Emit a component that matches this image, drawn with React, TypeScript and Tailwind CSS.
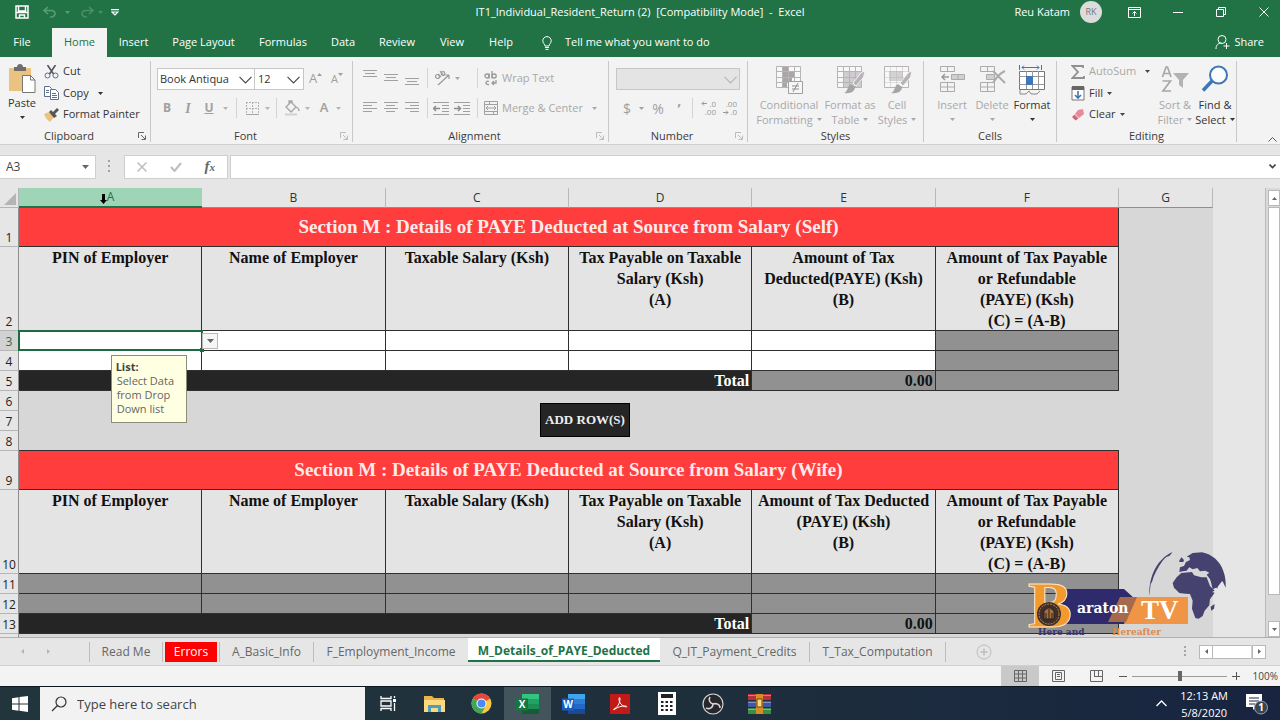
import React from "react";

const ui = "font-['Open_Sans','Noto_Sans',sans-serif]";
const serif = "font-['Liberation_Serif',serif]";

function Caret({ className = "text-[#444]" }: { className?: string }) {
  return (
    <svg width="5" height="3" viewBox="0 0 5 3" className={`shrink-0 ${className}`}>
      <path d="M0 0h5L2.5 3z" fill="currentColor" />
    </svg>
  );
}

function Chevron({ className = "" }: { className?: string }) {
  return (
    <svg width="13" height="8" viewBox="0 0 13 8" fill="none" stroke="currentColor" strokeWidth="1.1" className={className}>
      <path d="M.5.8 6.500 7l6-6.200" />
    </svg>
  );
}

function Lines({ kind }: { kind: "left" | "center" | "right" }) {
  const x = kind === "left" ? 0 : kind === "center" ? 2 : 5;
  return (
    <svg width="14" height="12" viewBox="0 0 14 12" fill="none" stroke="#a0a0a0">
      <path d={`M0 .5h14M${x} 3.500h9M0 6.500h14M${x} 9.500h9`} />
    </svg>
  );
}

function ThreeLines() {
  return (
    <svg width="14" height="8" viewBox="0 0 14 8" fill="none" stroke="#a0a0a0">
      <path d="M0 .5h14M2 3.500h10M0 6.500h14" />
    </svg>
  );
}

function Indent({ right = false }: { right?: boolean }) {
  return (
    <svg width="16" height="13" viewBox="0 0 16 13" fill="none" stroke="#a0a0a0">
      <path d="M0 .5h16M9 3.500h7M9 6.500h7M9 9.500h7M0 12.500h16" />
      <path d={right ? "M0 6.500h6M4 4l2.500 2.500L4 9" : "M7 6.500H1M3 4L.5 6.500 3 9"} strokeWidth="1.500" stroke="#8c8c8c" />
    </svg>
  );
}

function Sep() {
  return <span className="mx-1 h-5 w-px shrink-0 bg-[#d4d4d4]" />;
}

function Group({ label, width, launcher = "", children }: { label: string; width: string; launcher?: string; children: React.ReactNode }) {
  return (
    <section aria-label={label} className={`flex shrink-0 flex-col border-r border-[#c8c8c8] ${width}`}>
      <div className="flex h-[68px] shrink-0">{children}</div>
      <div className="flex h-[13px] shrink-0 items-center text-[11px] leading-[13px] text-[#3b3b3b]">
        <span className="flex-1 text-center">{label}</span>
        {launcher && (
          <button aria-label={`${label} settings`} className={`mr-1 ${launcher}`}>
            <svg width="8" height="8" viewBox="0 0 8 8" fill="none" stroke="currentColor">
              <path d="M.5 6V.5H6M3 3l4 4M7.500 3.500v4h-4" />
            </svg>
          </button>
        )}
      </div>
    </section>
  );
}

function BigButton({ lines, width, off = false, children }: { lines: string[]; width: string; off?: boolean; children: React.ReactNode }) {
  return (
    <button disabled={off} className={`flex flex-col items-center pt-1 text-[11px] leading-[15px] ${width} ${off ? "text-[#a8a8a8]" : "text-[#333]"}`}>
      <span className="flex h-8 items-start">{children}</span>
      <span className="whitespace-nowrap">{lines[0]}</span>
      <span className="flex h-[15px] items-center gap-1 whitespace-nowrap">
        {lines[1]}
        <Caret className="text-current" />
      </span>
    </button>
  );
}

function GridIcon({ kind }: { kind: "cond" | "table" | "cell" }) {
  return (
    <svg width="30" height="30" viewBox="0 0 30 30" fill="none">
      <path d="M2.500 1.500h24v21h-24z" fill="#f8f8f8" stroke="#b5b5b5" />
      {kind === "cond" && <path d="M9 2h5v5H9zM9 7h12v5H9zM9 12h9v5H9zM9 17h4v5H9z" fill="#a9a5a9" />}
      {kind === "table" && <path d="M9 7h17v15H9z" fill="#cfcbd0" />}
      {kind === "cell" && <path d="M7 6h14v10H7z" fill="#d5cfd6" />}
      <path d="M2 6.500h24M2 12.500h24M2 17.500h24M8.500 2v20M14.500 2v20M20.500 2v20" stroke="#b5b5b5" strokeOpacity={kind === "cell" ? 0.4 : 1} />
      {kind === "cond" ? (
        <g>
          <path d="M14.500 16.500h14v12h-14z" fill="#f6f6f6" stroke="#a0a0a0" />
          <path d="M18 21h7M18 24h7M24 18l-5 9" stroke="#8f8f8f" />
        </g>
      ) : (
        <g>
          <path d="M29 6c1 2 0 5-1 7l-7 8-3-3 8-10z" fill="#b5b5b5" stroke="#f3f3f3" />
          <path d="M16 19l4 3c0 4-4 7-11 6 4-1 3-7 7-9z" fill="#a5a5a5" />
        </g>
      )}
    </svg>
  );
}

function CellsIcon({ kind }: { kind: "insert" | "delete" }) {
  return (
    <svg width="28" height="28" viewBox="0 0 28 28" fill="none" stroke="#ababab">
      <path d="M2.500 1.500h14v5h-14zM9.500 1.500v5M2.500 17.500h14v9h-14zM9.500 17.500v9M2.500 22h14" />
      {kind === "insert" ? (
        <g>
          <path d="M13.500 9.500h13v5h-13zM20 9.500v5" fill="#d0d0d0" />
          <path d="M11 12H4M7 9l-3 3 3 3" strokeWidth="1.500" stroke="#9a9a9a" />
        </g>
      ) : (
        <g>
          <path d="M8.500 9.500h8v5h-8z" fill="#d0d0d0" />
          <path d="M15 6l12 12M27 6c-5 2-9 7-12 12" strokeWidth="2" />
        </g>
      )}
    </svg>
  );
}

function FormatIcon() {
  return (
    <svg width="28" height="30" viewBox="0 0 28 30" fill="none">
      <path d="M1.500 0v5M23.500 0v5M4 2.500h17M6 .5l-2 2 2 2M19 .5l2 2-2 2" stroke="#3f76b5" />
      <path d="M1.500 6.500h25v18h-25z" fill="#fff" stroke="#777" />
      <path d="M1 11.500h25M1 19.500h25M8.500 6v18M14.500 6v18M20.500 6v18" stroke="#999" />
      <path d="M8 11h7v9H8z" fill="#3f76b5" />
      <path d="M2 25v4h6l3-3 2 3h6l3-3" stroke="#888" />
    </svg>
  );
}

const tabs = [
  { name: "Insert", width: "w-[53px]" },
  { name: "Page Layout", width: "w-[87px]" },
  { name: "Formulas", width: "w-[72px]" },
  { name: "Data", width: "w-[48px]" },
  { name: "Review", width: "w-[60px]" },
  { name: "View", width: "w-[50px]" },
  { name: "Help", width: "w-[48px]" },
];

function TitleBar() {
  return (
    <header className="bg-[#217346] text-[11px] text-white">
      <div className="flex h-7 items-start">
        <div className="flex h-6 flex-1 items-center">
          <button aria-label="Save" className="ml-[15px]">
            <svg width="14" height="14" viewBox="0 0 14 14" fill="none" stroke="#fff" strokeWidth="1.500">
              <path d="M1 1h12v12H1zM1 7.500h12M3.500 1v5h7V1M4.500 13v-3h5v3" />
            </svg>
          </button>
          <button aria-label="Undo" disabled className="ml-[14px] flex items-center gap-2 text-[#5a9a76]">
            <svg width="14" height="12" viewBox="0 0 14 12" fill="none" stroke="currentColor" strokeWidth="1.600">
              <path d="M5 1L1 4.500 5 8M1 4.500h7c6 0 5 7-1 6.500" />
            </svg>
            <Caret className="text-current" />
          </button>
          <button aria-label="Redo" disabled className="ml-[10px] flex items-center gap-1 text-[#4a8f69]">
            <svg width="14" height="12" viewBox="0 0 14 12" fill="none" stroke="currentColor" strokeWidth="1.600">
              <path d="M9 1l4 3.500L9 8M13 4.500H6C0 4.500 1 11.500 7 11" />
            </svg>
            <Caret className="text-current" />
          </button>
          <button aria-label="Customize toolbar" className="ml-2">
            <svg width="8" height="7" viewBox="0 0 8 7" fill="none" stroke="#fff" strokeWidth="1.200">
              <path d="M0 .6h8M1 3l3 3 3-3z" />
            </svg>
          </button>
        </div>
        <h1 className="flex h-6 items-center whitespace-pre">IT1_Individual_Resident_Return (2)  [Compatibility Mode]  -  Excel</h1>
        <div className="flex h-6 flex-1 items-center justify-end">
          <span>Reu Katam</span>
          <span className="ml-[10px] flex h-[22px] w-[22px] items-center justify-center rounded-full bg-[#dcdcdc] text-[9px] text-[#777]">RK</span>
          <button aria-label="Ribbon options" className="ml-[26px]">
            <svg width="13" height="11" viewBox="0 0 13 11" fill="none" stroke="#fff">
              <path d="M.5.5h12v10H.5zM.5 2.500h12M6.500 9V4.500M4.500 6.500l2-2 2 2" />
            </svg>
          </button>
          <button aria-label="Minimize" className="ml-[32px]">
            <svg width="10" height="10" viewBox="0 0 10 10" stroke="#fff">
              <path d="M0 5.500h10" />
            </svg>
          </button>
          <button aria-label="Restore" className="ml-[33px]">
            <svg width="10" height="10" viewBox="0 0 10 10" fill="none" stroke="#fff">
              <path d="M.5 2.500h7v7h-7zM2.500 2.500v-2h7v7h-2" />
            </svg>
          </button>
          <button aria-label="Close" className="mr-[11px] ml-[33px]">
            <svg width="10" height="10" viewBox="0 0 10 10" stroke="#fff">
              <path d="M.5.5l9 9M9.500.5l-9 9" />
            </svg>
          </button>
        </div>
      </div>
      <nav className="flex h-[29px] items-center">
        <button className="w-11">File</button>
        <button className="ml-2 h-full w-[55px] bg-[#f3f3f3] text-[#217346]">Home</button>
        {tabs.map((t) => (
          <button key={t.name} className={`whitespace-nowrap ${t.width}`}>{t.name}</button>
        ))}
        <button className="ml-[17px] flex items-center gap-[13px] whitespace-nowrap">
          <svg width="10" height="14" viewBox="0 0 10 14" fill="none" stroke="#fff">
            <path d="M3 10C3 8 .8 7.500.8 4.800a4.200 4.200 0 018.400 0C9.200 7.500 7 8 7 10zM3 11.500h4M3.500 13.400h3" />
          </svg>
          Tell me what you want to do
        </button>
        <button className="mr-4 ml-auto flex items-center gap-1">
          <svg width="15" height="15" viewBox="0 0 15 15" fill="none" stroke="#fff">
            <path d="M1 14c0-4 2-6 5.500-6M7 8.500a4 4 0 110-8 4 4 0 010 8zM11.500 8v6M8.500 11h6" />
          </svg>
          Share
        </button>
      </nav>
    </header>
  );
}

function Ribbon() {
  return (
    <div className="flex h-[88px] border-b border-[#d0d0d0] bg-[#f3f3f3] pt-1 pb-[2px] text-[11px] text-[#333]">
      <Group label="Clipboard" width="w-[151px]" launcher="text-[#666]">
        <button className="flex w-11 flex-col items-center pt-[3px]">
          <svg width="28" height="29" viewBox="0 0 28 29" className="mb-[2px] shrink-0">
            <path d="M1 4h22v23H1z" fill="#eac282" />
            <path d="M6 7V3h3c0-4 6-4 6 0h3v4z" fill="#6d6d6d" />
            <path d="M14.500 11.500h8l4.500 4.500v12.500H14.500z" fill="#fff" stroke="#777" />
            <path d="M22.500 11.500V16H27" fill="none" stroke="#777" />
          </svg>
          <span className="leading-[15px]">Paste</span>
          <Caret className="mt-[6px]" />
        </button>
        <div className="flex flex-col">
          <button className="flex h-[21px] items-center gap-1">
            <svg width="15" height="14" viewBox="0 0 15 14" fill="none">
              <path d="M3.500 0l6 9M11.500 0l-6 9" stroke="#555" strokeWidth="1.600" />
              <circle cx="3.500" cy="10.500" r="2.500" stroke="#3f76b5" />
              <circle cx="11.500" cy="10.500" r="2.500" stroke="#3f76b5" />
            </svg>
            Cut
          </button>
          <button className="flex h-[22px] items-center gap-1">
            <svg width="15" height="14" viewBox="0 0 15 14" stroke="#5d6f8a">
              <path d="M.5.5h5l2 2v8h-7z" fill="#fff" />
              <path d="M6.500 3.500h5l3 3v7h-8z" fill="#fff" />
              <path d="M2 4.500h3M2 6.500h3M8 7.500h4M8 9.500h5M8 11.500h5" />
            </svg>
            Copy
            <Caret className="ml-[5px]" />
          </button>
          <button className="flex h-[21px] items-center gap-1 whitespace-nowrap">
            <svg width="15" height="14" viewBox="0 0 15 14">
              <path d="M0 6l5-2 5 5-4 5C3 12 1 9 0 6z" fill="#eac282" />
              <path d="M5 4l2-2 2 2 4-4 2 2-4 4 2 2-3 2z" fill="#555" />
            </svg>
            Format Painter
          </button>
        </div>
      </Group>

      <Group label="Font" width="w-[202px]" launcher="text-[#bbb]">
        <div className="flex flex-col pt-[7px] pl-[6px]">
          <div className="flex h-[22px] items-center">
            <label className="relative flex h-full">
              <select aria-label="Font name" className="w-[98px] appearance-none border border-[#c6c6c6] bg-white pl-[2px] text-[11px] text-[#333]">
                <option>Book Antiqua</option>
              </select>
              <Chevron className="pointer-events-none absolute top-2 right-[3px] text-[#444]" />
            </label>
            <label className="relative flex h-full">
              <select aria-label="Font size" className="w-[49px] appearance-none border border-l-0 border-[#c6c6c6] bg-white pl-[3px] text-[11px] text-[#333]">
                <option>12</option>
              </select>
              <Chevron className="pointer-events-none absolute top-2 right-1 text-[#444]" />
            </label>
            <button disabled aria-label="Increase font size" className="ml-[5px] flex w-[22px] text-[13px] text-[#a0a0a0]">
              A<Caret className="mt-1 rotate-180 text-current" />
            </button>
            <button disabled aria-label="Decrease font size" className="flex w-5 text-[11px] text-[#a0a0a0]">
              A<Caret className="mt-[2px] text-current" />
            </button>
          </div>
          <div className="mt-[6px] flex h-6 items-center text-[12px] text-[#a0a0a0]">
            <button disabled className="w-5 font-bold">B</button>
            <button disabled className={`w-[22px] text-[14px] font-bold italic ${serif}`}>I</button>
            <button disabled className="w-5 font-bold underline">U</button>
            <Caret className="mx-1 text-[#b5b5b5]" />
            <Sep />
            <button disabled aria-label="Borders" className="flex w-[22px] justify-center">
              <svg width="13" height="13" viewBox="0 0 13 13" fill="none" stroke="#b5b0b0">
                <path d="M.5 0v12M6.500 0v12M12.500 0v12M0 .5h13M0 6.500h13" strokeDasharray="2 1" />
                <path d="M0 12.500h13" stroke="#a5a5a5" />
              </svg>
            </button>
            <Caret className="mx-[2px] text-[#b5b5b5]" />
            <Sep />
            <button disabled aria-label="Fill color" className="flex w-[22px] justify-center">
              <svg width="16" height="16" viewBox="0 0 16 16" fill="none" stroke="#a5a5a5" strokeWidth="1.300">
                <path d="M2 7l5-5 5 5-5 5zM5 4V1h3v3M12 7c3 1 3 3 3 4" />
                <path d="M1 14.500h12" stroke="#d5d0d0" strokeWidth="2" />
              </svg>
            </button>
            <Caret className="mx-[2px] text-[#b5b5b5]" />
            <button disabled aria-label="Font color" className="w-6 text-[13px] font-semibold">A</button>
            <Caret className="text-[#b5b5b5]" />
          </div>
        </div>
      </Group>

      <Group label="Alignment" width="w-[256px]" launcher="text-[#bbb]">
        <div className="flex flex-col pt-[2px] pl-[10px] text-[#a8a8a8]">
          <div className="flex h-[30px] items-center">
            <button disabled aria-label="Top align" className="w-[21px] pb-2"><ThreeLines /></button>
            <button disabled aria-label="Middle align" className="w-[21px]"><ThreeLines /></button>
            <button disabled aria-label="Bottom align" className="w-[18px] pt-2"><ThreeLines /></button>
            <Sep />
            <button disabled aria-label="Orientation" className="flex w-[41px] items-center gap-1 pl-[2px]">
              <svg width="17" height="16" viewBox="0 0 17 16" fill="none" stroke="#999" strokeWidth="1.200">
                <path d="M4 15L15 5M15 5h-4M15 5v4" />
                <circle cx="3.500" cy="6.500" r="2" />
                <path d="M4 4l3 3M6 1l4 5" />
                <circle cx="9" cy="3.500" r="1.800" />
              </svg>
              <Caret className="text-current" />
            </button>
            <Sep />
            <button disabled className="ml-[2px] flex items-center gap-1 whitespace-nowrap">
              <svg width="14" height="15" viewBox="0 0 14 15" fill="none" stroke="#999" strokeWidth="1.300">
                <circle cx="3" cy="5" r="2" />
                <path d="M5.200 2.500V7.500M8 0v7.500M5 10.500c-3-1.500-5 3.500 0 3M12 9v3H8M10 10l-2 2 2 2" />
                <circle cx="10.200" cy="5" r="2" />
              </svg>
              Wrap Text
            </button>
          </div>
          <div className="flex h-[30px] items-center">
            <button disabled aria-label="Align left" className="w-[21px]"><Lines kind="left" /></button>
            <button disabled aria-label="Center" className="w-[21px]"><Lines kind="center" /></button>
            <button disabled aria-label="Align right" className="w-[18px]"><Lines kind="right" /></button>
            <Sep />
            <button disabled aria-label="Decrease indent" className="w-[21px] pl-px"><Indent /></button>
            <button disabled aria-label="Increase indent" className="w-5 pl-px"><Indent right /></button>
            <Sep />
            <button disabled className="ml-[2px] flex items-center gap-1 whitespace-nowrap">
              <svg width="14" height="14" viewBox="0 0 14 14" fill="none" stroke="#a0a0a0">
                <path d="M.5.5h13v13H.5zM0 3.500h14M0 10.500h14M5.500 0v3M9.500 11v3M2 7h10M4 5L2 7l2 2M10 5l2 2-2 2" />
              </svg>
              Merge &amp; Center
              <Caret className="ml-[5px] text-current" />
            </button>
          </div>
        </div>
      </Group>

      <Group label="Number" width="w-[139px]" launcher="text-[#bbb]">
        <div className="flex flex-col pt-[7px] pl-[7px] text-[#a0a0a0]">
          <label className="relative flex h-[22px]">
            <select aria-label="Number format" disabled className="w-[124px] appearance-none border border-[#c6c6c6] bg-[#e4e4e4]" />
            <Chevron className="pointer-events-none absolute top-2 right-[3px] text-[#b5b5b5]" />
          </label>
          <div className="mt-[6px] flex h-6 items-center text-[14px]">
            <button disabled className="w-[22px]">$</button>
            <Caret className="mx-px" />
            <button disabled className="w-[26px]">%</button>
            <button disabled aria-label="Comma style" className="w-4 font-bold">’</button>
            <span className="mx-[5px] h-5 w-px bg-[#d4d4d4]" />
            <button disabled aria-label="Increase decimal" className="flex w-[21px] justify-center">
              <svg width="15" height="16" viewBox="0 0 15 16" fill="none" stroke="#999">
                <path d="M6 3.500H1M3 1.500l-2 2 2 2" />
                <text x="15" y="7" textAnchor="end" fontSize="8" fill="#999" stroke="none">.0</text>
                <text x="15" y="15" textAnchor="end" fontSize="8" fill="#999" stroke="none">.00</text>
              </svg>
            </button>
            <button disabled aria-label="Decrease decimal" className="flex w-[21px] justify-center">
              <svg width="15" height="16" viewBox="0 0 15 16" fill="none" stroke="#999">
                <path d="M1 12.500h5M4 10.500l2 2-2 2" />
                <text x="15" y="7" textAnchor="end" fontSize="8" fill="#999" stroke="none">.00</text>
                <text x="15" y="15" textAnchor="end" fontSize="8" fill="#999" stroke="none">.0</text>
              </svg>
            </button>
          </div>
        </div>
      </Group>

      <Group label="Styles" width="w-[176px]">
        <div className="flex pl-2">
          <BigButton off lines={["Conditional", "Formatting"]} width="w-[66px]"><GridIcon kind="cond" /></BigButton>
          <BigButton off lines={["Format as", "Table"]} width="w-[56px]"><GridIcon kind="table" /></BigButton>
          <BigButton off lines={["Cell", "Styles"]} width="w-[38px]"><GridIcon kind="cell" /></BigButton>
        </div>
      </Group>

      <Group label="Cells" width="w-[133px]">
        <div className="flex pl-2">
          <BigButton off lines={["Insert", ""]} width="w-10"><CellsIcon kind="insert" /></BigButton>
          <BigButton off lines={["Delete", ""]} width="w-10"><CellsIcon kind="delete" /></BigButton>
          <BigButton lines={["Format", ""]} width="w-10"><FormatIcon /></BigButton>
        </div>
      </Group>

      <Group label="Editing" width="w-[180px]">
        <div className="flex w-[98px] shrink-0 flex-col pl-[14px]">
          <button disabled className="flex h-[21px] items-center gap-1 text-[#a8a8a8]">
            <svg width="14" height="14" viewBox="0 0 14 14" fill="none" stroke="#8f8f8f" strokeWidth="1.800">
              <path d="M12 3V1H1.500L7 7l-5.500 6H13v-2" />
            </svg>
            AutoSum
            <Caret className="ml-[5px] text-[#444]" />
          </button>
          <button className="flex h-[22px] items-center gap-1">
            <svg width="14" height="15" viewBox="0 0 14 15" fill="none">
              <path d="M1 1h12v13H1z" fill="#fff" stroke="#777" />
              <path d="M1 0h12v4H1z" fill="#666" />
              <path d="M7 5v7M4 9l3 3 3-3" stroke="#3f76b5" strokeWidth="1.600" />
            </svg>
            Fill
            <Caret />
          </button>
          <button className="flex h-[21px] items-center gap-1">
            <svg width="14" height="12" viewBox="0 0 14 12">
              <path d="M7 1l5-1 1 5-5 4-4-4z" fill="#e88a9c" />
              <path d="M3.500 5.500l4 4-3 2L1 8z" fill="#d9627c" />
            </svg>
            Clear
            <Caret />
          </button>
        </div>
        <BigButton off lines={["Sort &", "Filter"]} width="w-10">
          <svg width="28" height="28" viewBox="0 0 28 28" fill="none">
            <path d="M1.500 12L5 2h1.500L10 12M3 8.500h6M1.500 16h8L2 26h8" stroke="#a8a8a8" strokeWidth="1.700" />
            <path d="M12 8h16l-6 7v8l-4-3v-5z" fill="#b3b3b3" />
          </svg>
        </BigButton>
        <BigButton lines={["Find &", "Select"]} width="w-10">
          <svg width="28" height="28" viewBox="0 0 28 28" fill="none" stroke="#3f76b5">
            <circle cx="17.500" cy="10" r="8.500" strokeWidth="2" fill="#fbfcfe" />
            <path d="M11 16L2 25.500" strokeWidth="3.500" />
          </svg>
        </BigButton>
      </Group>
      <button aria-label="Collapse ribbon" className="mt-auto mr-[3px] ml-auto text-[#555]">
        <svg width="9" height="5" viewBox="0 0 9 5" fill="none" stroke="currentColor">
          <path d="M.5 4.500l4-4 4 4" />
        </svg>
      </button>
    </div>
  );
}

function FormulaBar() {
  return (
    <div className="flex h-[43px] items-center bg-[#e6e6e6] text-[12px] text-[#444]">
      <label className="flex h-6 w-24 items-center border border-l-0 border-[#cfcfcf] bg-white">
        <input aria-label="Name box" defaultValue="A3" className="w-[78px] pl-[6px] text-[12px] outline-none" />
        <svg width="7" height="4" viewBox="0 0 7 4" className="ml-1"><path d="M0 0h7L3.500 4z" fill="#666" /></svg>
      </label>
      <svg width="3" height="13" viewBox="0 0 3 13" className="ml-3 text-[#a0a0a0]">
        <path d="M0 1h2M0 6h2M0 11h2" stroke="currentColor" strokeWidth="2" />
      </svg>
      <div className="ml-[13px] flex h-6 w-[104px] items-center justify-between border border-[#cfcfcf] bg-white px-3">
        <button aria-label="Cancel">
          <svg width="10" height="10" viewBox="0 0 10 10" stroke="#bdbdbd" strokeWidth="1.500"><path d="M.5.5l9 9M9.500.5l-9 9" /></svg>
        </button>
        <button aria-label="Enter">
          <svg width="12" height="10" viewBox="0 0 12 10" fill="none" stroke="#bdbdbd" strokeWidth="2"><path d="M1 5l3.500 4L11 1" /></svg>
        </button>
        <button aria-label="Insert function" className={`text-[15px] font-bold text-[#666] italic ${serif}`}>f<span className="text-[11px]">x</span></button>
      </div>
      <label className="ml-[2px] flex h-6 flex-1 items-center border border-r-0 border-[#cfcfcf] bg-white">
        <input aria-label="Formula" className="flex-1 px-2 outline-none" />
        <svg width="7" height="5" viewBox="0 0 7 5" fill="none" stroke="#444" strokeWidth="1.600" className="mr-1"><path d="M.5.5l3 3 3-3" /></svg>
      </label>
    </div>
  );
}

const cell = "border-r border-b border-[#2f2f2f]";
const rowHead = "border-r border-b border-[#b5b5b5] border-r-[#8e8e8e] p-0 text-center align-bottom text-[12px] leading-[17px] font-normal";

function RowHead({ n }: { n: number }) {
  return (
    <th scope="row" className={n === 3 ? `${rowHead} bg-[#d2d2d2] text-[#217346]` : `${rowHead} bg-[#e6e6e6] text-[#222]`}>
      <span className="flex justify-center">{n}</span>
    </th>
  );
}

function Margin() {
  return (
    <>
      <td className="bg-[#d7d7d7]" />
      <td />
    </>
  );
}

function SectionTitle({ n, children }: { n: number; children: string }) {
  return (
    <tr className="h-[39px]">
      <RowHead n={n} />
      <td colSpan={6} className={`bg-[#ff3d3d] p-0 text-center text-[19px] leading-6 font-bold text-[#ffeaea] ${cell} ${serif}`}>{children}</td>
      <Margin />
    </tr>
  );
}

function Headings({ n, items }: { n: number; items: string[][] }) {
  return (
    <tr className="h-[84px]">
      <RowHead n={n} />
      {items.map((lines, i) => (
        <td key={i} className={`bg-[#e4e4e4] p-0 text-center align-top text-[16px] leading-[21px] font-bold whitespace-nowrap text-[#111] ${cell} ${serif}`}>
          <div className="h-[83px]">
            {lines.map((l) => (
              <div key={l}>{l}</div>
            ))}
          </div>
        </td>
      ))}
      <Margin />
    </tr>
  );
}

function TotalRow({ n }: { n: number }) {
  return (
    <tr className="h-5">
      <RowHead n={n} />
      <td colSpan={4} className={`bg-[#252525] p-0 pr-[2px] text-right text-[16px] leading-[18px] font-bold text-white ${cell} ${serif}`}>Total</td>
      <td className={`bg-[#919191] p-0 pr-[2px] text-right text-[16px] leading-[18px] font-bold text-[#111] ${cell} ${serif}`}>0.00</td>
      <td className={`bg-[#919191] ${cell}`} />
      <Margin />
    </tr>
  );
}

const selfHeads = [
  ["PIN of Employer"],
  ["Name of Employer"],
  ["Taxable Salary (Ksh)"],
  ["Tax Payable on Taxable", "Salary (Ksh)", "(A)"],
  ["Amount of Tax", "Deducted(PAYE) (Ksh)", "(B)"],
  ["Amount of Tax Payable", "or Refundable", "(PAYE) (Ksh)", "(C) = (A-B)"],
];
const wifeHeads = selfHeads.map((h, i) => (i === 4 ? ["Amount of Tax Deducted", "(PAYE) (Ksh)", "(B)"] : h));

function SelectedCell() {
  return (
    <td className="relative border-b border-[#2f2f2f] bg-white p-0">
      <input aria-label="A3" className="absolute -inset-px w-[calc(100%+2px)] border-2 border-[#1d6b42] bg-white outline-none" />
      <span className="absolute -right-[2px] -bottom-[2px] h-1 w-1 bg-[#1d6b42]" />
      <button aria-label="Open list" className="absolute top-[2px] left-full z-10 flex h-4 w-4 items-center justify-center border border-[#b9b9b9] bg-[#f6f6f6]">
        <svg width="7" height="4" viewBox="0 0 7 4"><path d="M0 0h7L3.500 4z" fill="#666" /></svg>
      </button>
      <div role="tooltip" className="absolute top-6 left-1/2 z-10 h-[68px] w-[76px] border border-[#8c8c78] bg-[#ffffe1] py-1 pl-1 text-[11px] leading-[14px] text-[#666]">
        <b className="block text-[#444]">List:</b>
        <p className="pl-px whitespace-nowrap">Select Data<br />from Drop<br />Down list</p>
      </div>
    </td>
  );
}

function Sheet() {
  return (
    <table className="w-full table-fixed border-separate border-spacing-0 bg-[#e6e6e6]">
      <colgroup>
        <col className="w-[19px]" />
        <col /><col /><col /><col /><col /><col />
        <col className="w-[94px]" />
        <col className="w-[52px]" />
      </colgroup>
      <thead>
        <tr className="h-5 text-[12px] leading-[18px] text-[#333]">
          <th className="border-r border-b border-[#b5b5b5] p-0 align-bottom">
            <svg width="12" height="12" viewBox="0 0 12 12" className="mb-[2px] ml-1"><path d="M12 0v12H0z" fill="#b4b4b4" /></svg>
          </th>
          <th className="relative border-b-2 border-[#217346] bg-[#9fd5b7] p-0 font-normal text-[#217346]">
            A
            <svg width="7" height="10" viewBox="0 0 7 10" className="absolute top-[6px] right-1/2 mr-1"><path d="M2 0h3v6h2L3.500 10 0 6h2z" /></svg>
          </th>
          {["B", "C", "D", "E", "F", "G"].map((c) => (
            <th key={c} className="border-r border-b border-[#b9b9b9] border-b-[#8e8e8e] p-0 font-normal">{c}</th>
          ))}
          <th />
        </tr>
      </thead>
      <tbody>
        <SectionTitle n={1}>Section M : Details of PAYE Deducted at Source from Salary (Self)</SectionTitle>
        <Headings n={2} items={selfHeads} />
        {[3, 4].map((n) => (
          <tr key={n} className="h-5">
            <RowHead n={n} />
            {n === 3 ? <SelectedCell /> : <td className={`bg-white ${cell}`} />}
            {["B", "C", "D", "E"].map((c) => (
              <td key={c} className={`bg-white ${cell}`} />
            ))}
            <td className={`bg-[#919191] ${cell}`} />
            <Margin />
          </tr>
        ))}
        <TotalRow n={5} />
        <tr className="h-5">
          <RowHead n={6} />
          <td colSpan={6} rowSpan={3} className="border-b border-[#2f2f2f] bg-[#d7d7d7] p-0 pt-3 pl-8 text-center align-top">
            <button className={`h-[34px] border border-black bg-[#252525] px-1 text-[13px] font-bold whitespace-nowrap text-[#eee] ${serif}`}>ADD ROW(S)</button>
          </td>
          <Margin />
        </tr>
        <tr className="h-5"><RowHead n={7} /><Margin /></tr>
        <tr className="h-5"><RowHead n={8} /><Margin /></tr>
        <SectionTitle n={9}>Section M : Details of PAYE Deducted at Source from Salary (Wife)</SectionTitle>
        <Headings n={10} items={wifeHeads} />
        {[11, 12].map((n) => (
          <tr key={n} className="h-5">
            <RowHead n={n} />
            {["A", "B", "C", "D", "E", "F"].map((c) => (
              <td key={c} className={`bg-[#919191] ${cell}`} />
            ))}
            <Margin />
          </tr>
        ))}
        <TotalRow n={13} />
        <tr className="h-5">
          <RowHead n={14} />
          <td colSpan={6} className="bg-[#d7d7d7]" />
          <Margin />
        </tr>
      </tbody>
    </table>
  );
}

function VerticalScroll() {
  return (
    <div className="flex w-[15px] shrink-0 flex-col border-l border-[#b9b9b9] bg-[#d9d9d9] pl-[2px]">
      <button aria-label="Scroll up" className="mt-[2px] flex h-4 shrink-0 items-center justify-center border border-[#b9b9b9] bg-white"><Caret className="rotate-180 text-[#666]" /></button>
      <div className="mt-px h-[388px] border border-[#b9b9b9] bg-white" />
      <div className="flex-1" />
      <button aria-label="Scroll down" className="flex h-4 shrink-0 items-center justify-center border border-[#b9b9b9] bg-white"><Caret className="text-[#666]" /></button>
    </div>
  );
}

function StationLogo() {
  return (
    <svg width="204" height="89" viewBox="0 0 204 89" className="absolute right-[48px] bottom-0">
      <g fill="#46426f" transform="translate(-8 -8) scale(.3333)">
        <path d="M388 168c-2-60 24-112 70-132l-10 12c-8 0-14 8-20 14-14 20-26 40-32 64l-4 6z" />
        <path d="M478 62l6-10 8 8-2 6-12 0z" />
        <path d="M500 50l18-11 28-2c30 6 54 26 64 56 6 16 8 34 7 50l-9-19-10 4-4 4-2 14-12-14-14-20-6-8 8-6-12-6-16 2-8-10-14 4-10-6-8 10-12 2-10 2 2-14 12-4 6-12 12-6-2-8z" />
        <path d="M470 112l14-13 32-3 6 10 22 6 16 0 10 26 14 14-8 4 8 2-14 20-2 18-14 16-6 16-12 8-10-2-10-28 2-24-8-20-14-1-18-2-16-16-4-14z" />
        <path d="M568 106l16 14 20 6-12 16-14 6z" />
        <path d="M584 192l-2 14-8 6-2-12z" />
      </g>
      <path d="M28 41h68l11 10-9 25H28z" fill="#2f2a6b" />
      <path d="M104 49h56v27H96z" fill="#f09446" />
      <path d="M92 49h17l-11 25H80z" fill="#a5694b" />
      <text x="0" y="79" fontSize="66" fontWeight="bold" fill="#f29a2e" stroke="#fbe9c8" strokeWidth="1" className="font-['Liberation_Serif',serif]">B</text>
      <circle cx="21" cy="66" r="12" fill="#3d2f2c" />
      <circle cx="21" cy="66" r="10" fill="none" stroke="#c98238" strokeDasharray="2 1" />
      <path d="M16 71v-8l5-4 5 4v8zM21 60v11M18 71v-6M24 71v-6" fill="#a8713a" stroke="#2b2220" />
      <text x="49" y="65" fontSize="14" fontWeight="bold" fill="#fff" className="font-['DejaVu_Serif',serif]">araton</text>
      <text x="113" y="71" fontSize="27" fontWeight="bold" fill="#fff" className="font-['Liberation_Serif',serif]">TV</text>
      <text x="10" y="87" fontSize="9" fontWeight="bold" fill="#3a3468" className="font-['DejaVu_Serif',serif]">Here and</text>
      <text x="84" y="87" fontSize="9" fontWeight="bold" fill="#d98b4a" className="font-['DejaVu_Serif',serif]">Hereafter</text>
    </svg>
  );
}

const sheetTabs = [
  { name: "Read Me", style: "w-[74px] h-5 border-l border-r border-[#bdbdbd]" },
  { name: "Errors", style: "mx-[2px] h-5 w-[52px] bg-[#f00] text-white" },
  { name: "A_Basic_Info", style: "w-[95px] h-5 border-l border-r border-[#bdbdbd]" },
  { name: "F_Employment_Income", style: "w-[154px]" },
  { name: "M_Details_of_PAYE_Deducted", style: "w-[192px] self-stretch mb-[3px] border-b-2 border-[#217346] bg-white pt-1 font-bold text-[#217346]" },
  { name: "Q_IT_Payment_Credits", style: "w-[150px] h-5 border-r border-[#bdbdbd]" },
  { name: "T_Tax_Computation", style: "w-[136px] h-5 border-r border-[#bdbdbd]" },
];

function SheetTabs() {
  return (
    <div className="flex h-[28px] shrink-0 items-center border-t border-[#b0b0b0] bg-[#e6e6e6] text-[12px] text-[#666]">
      <button aria-label="Previous sheet" className="ml-5"><Caret className="rotate-90 text-[#b5b5b5]" /></button>
      <button aria-label="Next sheet" className="ml-[21px]"><Caret className="-rotate-90 text-[#b5b5b5]" /></button>
      <div className="ml-[38px] flex items-center self-stretch">
        {sheetTabs.map((t) => (
          <button key={t.name} className={`whitespace-nowrap ${t.style}`}>{t.name}</button>
        ))}
      </div>
      <button aria-label="New sheet" className="ml-[30px]">
        <svg width="16" height="16" viewBox="0 0 16 16" fill="none" stroke="#bdbdbd"><circle cx="8" cy="8" r="7" /><path d="M8 4.500v7M4.500 8h7" strokeWidth="1.500" /></svg>
      </button>
      <svg width="2" height="12" viewBox="0 0 2 12" className="ml-auto" stroke="#a5a5a5" strokeWidth="2"><path d="M0 1h2M0 5h2M0 9h2" /></svg>
      <div className="mr-[14px] ml-[13px] flex h-[14px] w-[67px] bg-[#d0d0d0]">
        <button aria-label="Scroll left" className="flex w-[14px] items-center justify-center border border-[#b9b9b9] bg-white"><Caret className="rotate-90" /></button>
        <div className="flex-1 border-y border-[#b9b9b9] bg-white" />
        <button aria-label="Scroll right" className="ml-px flex w-[14px] items-center justify-center border border-[#b9b9b9] bg-white"><Caret className="-rotate-90" /></button>
      </div>
    </div>
  );
}

function StatusBar() {
  return (
    <div className="flex h-[21px] shrink-0 items-center justify-end border-t border-[#d0d0d0] bg-[#f3f3f3] text-[10px] text-[#444]">
      <button aria-label="Normal view" className="flex h-full w-[38px] items-center justify-center bg-[#c9c9c9]">
        <svg width="13" height="12" viewBox="0 0 13 12" fill="none" stroke="#666"><path d="M.5.5h12v11H.5zM4.500 0v12M8.500 0v12M0 4h13M0 8h13" /></svg>
      </button>
      <button aria-label="Page layout view" className="flex w-[38px] justify-center">
        <svg width="13" height="12" viewBox="0 0 13 12" fill="none" stroke="#666"><path d="M.5.5h12v11H.5zM3.500 2.500h6v7h-6zM5 4.500h3M5 6.500h3" /></svg>
      </button>
      <button aria-label="Page break view" className="flex w-[38px] justify-center">
        <svg width="13" height="12" viewBox="0 0 13 12" fill="none" stroke="#666"><path d="M.5.5h12v11H.5zM4.500 0v6.500M8.500 0v6.500M4 6.500h8" /></svg>
      </button>
      <button aria-label="Zoom out" className="ml-1"><svg width="8" height="8" viewBox="0 0 8 8" stroke="#555"><path d="M0 4.500h8" /></svg></button>
      <input
        aria-label="Zoom"
        type="range"
        defaultValue={50}
        className="mx-[5px] h-px w-[95px] appearance-none bg-[#9a9a9a] [&::-webkit-slider-thumb]:h-[10px] [&::-webkit-slider-thumb]:w-1 [&::-webkit-slider-thumb]:appearance-none [&::-webkit-slider-thumb]:bg-[#666]"
      />
      <button aria-label="Zoom in"><svg width="8" height="8" viewBox="0 0 8 8" stroke="#555"><path d="M0 4.500h8M4.500 0v8" /></svg></button>
      <span className="w-10 pr-[2px] text-right">100%</span>
    </div>
  );
}

function OfficeIcon({ letter, tile, shades }: { letter: string; tile: string; shades: string[] }) {
  return (
    <svg width="23" height="20" viewBox="0 0 23 20">
      <path d="M6 0h17v5H6z" fill={shades[0]} />
      <path d="M6 5h17v5H6z" fill={shades[1]} />
      <path d="M6 10h17v5H6z" fill={shades[2]} />
      <path d="M6 15h17v5H6z" fill={shades[3]} />
      <path d="M0 4.500h12v12H0z" fill={tile} />
      <text x="6" y="14" textAnchor="middle" fontSize="10" fontWeight="bold" fill="#fff">{letter}</text>
    </svg>
  );
}

const apps = [
  {
    name: "Task view",
    icon: (
      <svg width="17" height="15" viewBox="0 0 17 15" fill="none" stroke="#fff" strokeWidth="1.300">
        <path d="M1 0v2.500h10V0M1 15v-2.500h10V15M1 5h10v5H1zM14.500 0v2M14.500 7v8" />
        <path d="M13 3h3v3h-3z" fill="#fff" stroke="none" />
      </svg>
    ),
  },
  {
    name: "File Explorer",
    icon: (
      <svg width="21" height="18" viewBox="0 0 21 18">
        <path d="M0 1h8l2 2h10v14H0z" fill="#e9b44c" />
        <path d="M0 5h21v12H0z" fill="#fbd97c" />
        <path d="M4 17v-7h13v7h-3v-4H7v4z" fill="#4a9fc0" />
      </svg>
    ),
  },
  {
    name: "Chrome",
    icon: (
      <svg width="21" height="21" viewBox="0 0 42 42">
        <circle cx="21" cy="21" r="20" fill="#f6c844" />
        <path d="M21 21L3.700 11A20 20 0 0138.300 11z" fill="#e0493c" />
        <path d="M21 21L3.700 11A20 20 0 0021 41l8-15z" fill="#3fa659" />
        <circle cx="21" cy="21" r="10" fill="#fff" />
        <circle cx="21" cy="21" r="8" fill="#4a8af4" />
      </svg>
    ),
  },
  { name: "Excel", icon: <OfficeIcon letter="X" tile="#17753f" shades={["#32c481", "#22a366", "#1b8f55", "#185c37"]} /> },
  { name: "Word", icon: <OfficeIcon letter="W" tile="#1a5dbe" shades={["#41a5ee", "#2b7cd3", "#2268c4", "#1a4a96"]} /> },
  {
    name: "Acrobat",
    icon: (
      <svg width="20" height="20" viewBox="0 0 20 20" fill="none">
        <path d="M0 0h20v20H0z" fill="#c21b17" />
        <path d="M4 15c3-1 6-6 6-10 0-2-1-2-1 0 0 4 3 7 7 8 1 0 1-1-1-1-4 0-7 1-10 3-1 1-2 1-1 0z" stroke="#fff" />
      </svg>
    ),
  },
  {
    name: "Calculator",
    icon: (
      <svg width="18" height="23" viewBox="0 0 18 23">
        <path d="M0 0h18v23H0z" fill="#fff" />
        <path d="M3 2h12v4H3z" fill="#222" />
        <path d="M3 10h12M3 14h12M3 18h12" stroke="#222" strokeWidth="2" strokeDasharray="2.500 2" />
      </svg>
    ),
  },
  {
    name: "OBS Studio",
    icon: (
      <svg width="22" height="22" viewBox="0 0 22 22" fill="none">
        <circle cx="11" cy="11" r="10" fill="#26262b" stroke="#d5d5d5" strokeWidth="1.200" />
        <path d="M11 11c-3-1-5-4-3-7M11 11c3-1 7 0 7 4M11 11c0 3-3 6-7 4" stroke="#d5d5d5" strokeWidth="1.600" />
      </svg>
    ),
  },
  {
    name: "WinRAR",
    icon: (
      <svg width="23" height="21" viewBox="0 0 23 21">
        <path d="M0 1h23v6H0z" fill="#b5323c" />
        <path d="M0 8h23v6H0z" fill="#3e57a8" />
        <path d="M0 15h23v6H0z" fill="#3d8c45" />
        <path d="M0 2.500h23M0 9.500h23M0 16.500h23" stroke="#fff" strokeOpacity=".35" />
        <path d="M8 1h7v20H8z" fill="#d98b28" />
        <path d="M9 6h5v8H9z" fill="#f5d98b" stroke="#6b4214" />
      </svg>
    ),
  },
];

function Taskbar() {
  return (
    <footer className="flex h-[34px] shrink-0 items-center border-t border-[#0e171c] bg-linear-to-r from-[#22353d] via-[#1f303c] to-[#182440] text-[11px] text-white">
      <button aria-label="Start" className="flex w-10 justify-center">
        <svg width="16" height="16" viewBox="0 0 16 16" fill="#fff"><path d="M0 2.300l6.500-1v6.300H0zM7.500 1.100L16 0v7.600H7.500zM0 8.500h6.500v6.300L0 13.800zM7.500 8.500H16V16l-8.500-1.200z" /></svg>
      </button>
      <label className="flex h-full w-[325px] items-center bg-[#f2f2f2]">
        <svg width="16" height="16" viewBox="0 0 16 16" fill="none" stroke="#333" strokeWidth="1.200" className="ml-[11px]"><circle cx="10" cy="6" r="5" /><path d="M6.500 9.500L1 15" /></svg>
        <input type="search" aria-label="Search" placeholder="Type here to search" className="ml-[10px] flex-1 pt-[2px] text-[13px] outline-none placeholder:text-[#444]" />
      </label>
      <nav className="flex h-full w-[418px]">
        {apps.map((a) => (
          <button key={a.name} aria-label={a.name} className={a.name === "Excel" ? "flex flex-1 items-center justify-center bg-[#43545c]" : "flex flex-1 items-center justify-center"}>
            {a.icon}
          </button>
        ))}
      </nav>
      <button aria-label="Hidden icons" className="mr-[13px] ml-auto">
        <svg width="11" height="7" viewBox="0 0 11 7" fill="none" stroke="#fff" strokeWidth="1.300"><path d="M.5 6l5-5 5 5" /></svg>
      </button>
      <div className="text-center leading-[17px]">
        <div>12:13 AM</div>
        <div>5/8/2020</div>
      </div>
      <button aria-label="Notifications" className="mr-[11px] ml-[18px]">
        <svg width="23" height="23" viewBox="0 0 23 23">
          <path d="M0 2h16v13h-6l-3 3v-3H0z" fill="#fff" />
          <path d="M3 6h10M3 9h10M3 12h6" stroke="#1a2740" />
          <circle cx="15" cy="15.500" r="6.500" fill="#3a4350" stroke="#9aa3ad" />
          <text x="15" y="19" textAnchor="middle" fontSize="10" fontWeight="bold" fill="#fff">1</text>
        </svg>
      </button>
    </footer>
  );
}

export default function App() {
  return (
    <div className={`flex h-screen flex-col overflow-hidden bg-[#e6e6e6] ${ui}`}>
      <TitleBar />
      <Ribbon />
      <FormulaBar />
      <main className="relative flex min-h-0 flex-1 overflow-hidden">
        <div className="min-w-0 flex-1 overflow-hidden">
          <Sheet />
        </div>
        <VerticalScroll />
        <StationLogo />
      </main>
      <SheetTabs />
      <StatusBar />
      <Taskbar />
    </div>
  );
}
